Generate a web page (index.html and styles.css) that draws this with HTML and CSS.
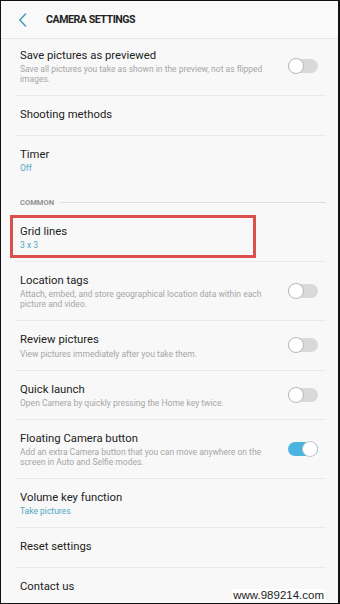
FILE: index.html
```html
<!DOCTYPE html>
<html>
<head>
<meta charset="utf-8">
<link rel="stylesheet" href="styles.css">
</head>
<body>
<div class="frame">
  <header class="topbar">
    <svg class="back" width="10" height="14" viewBox="0 0 10 14"><path d="M7.5 1 L1.8 7 L7.5 13" fill="none" stroke="#3d9db6" stroke-width="1.5" stroke-linecap="round" stroke-linejoin="round"/></svg>
    <span class="topbar-title">CAMERA SETTINGS</span>
  </header>
  <div class="list">
    <div class="row first">
      <div class="text">
        <div class="title">Save pictures as previewed</div>
        <div class="sub">Save all pictures you take as shown in the preview, not as flipped images.</div>
      </div>
      <span class="toggle"><span class="knob"></span></span>
    </div>
    <div class="row">
      <div class="text"><div class="title">Shooting methods</div></div>
    </div>
    <div class="row plain">
      <div class="text">
        <div class="title">Timer</div>
        <div class="value">Off</div>
      </div>
    </div>
    <div class="category"><span class="cat-label">COMMON</span><span class="cat-line"></span></div>
    <div class="row highlight">
      <div class="text">
        <div class="title">Grid lines</div>
        <div class="value">3 x 3</div>
      </div>
      <span class="mark"></span>
    </div>
    <div class="row">
      <div class="text">
        <div class="title">Location tags</div>
        <div class="sub">Attach, embed, and store geographical location data within each picture and video.</div>
      </div>
      <span class="toggle"><span class="knob"></span></span>
    </div>
    <div class="row">
      <div class="text">
        <div class="title">Review pictures</div>
        <div class="sub">View pictures immediately after you take them.</div>
      </div>
      <span class="toggle"><span class="knob"></span></span>
    </div>
    <div class="row">
      <div class="text">
        <div class="title">Quick launch</div>
        <div class="sub">Open Camera by quickly pressing the Home key twice.</div>
      </div>
      <span class="toggle"><span class="knob"></span></span>
    </div>
    <div class="row">
      <div class="text">
        <div class="title">Floating Camera button</div>
        <div class="sub">Add an extra Camera button that you can move anywhere on the screen in Auto and Selfie modes.</div>
      </div>
      <span class="toggle on"><span class="knob"></span></span>
    </div>
    <div class="row">
      <div class="text">
        <div class="title">Volume key function</div>
        <div class="value">Take pictures</div>
      </div>
    </div>
    <div class="row">
      <div class="text"><div class="title">Reset settings</div></div>
    </div>
    <div class="row plain">
      <div class="text"><div class="title">Contact us</div></div>
    </div>
  </div>
  <span class="watermark">www.989214.com</span>
</div>
</body>
</html>
```
FILE: styles.css
```css
* { box-sizing: border-box; }
html, body { margin: 0; padding: 0; }
body {
  width: 340px;
  height: 604px;
  background: #f8f8f8;
  font-family: Roboto, "Noto Sans", Arial, sans-serif;
  overflow: hidden;
}
.frame {
  position: relative;
  width: 340px;
  height: 604px;
  border: 1px solid #111;
  border-right-width: 2px;
  background: #f8f8f8;
  overflow: hidden;
}
.topbar {
  height: 38px;
  display: flex;
  align-items: center;
  border-bottom: 1px solid #e6e6e6;
  background: #f9f9f9;
}
.back {
  display: block;
  margin-left: 17px;
  margin-right: 18px;
}
.topbar-title {
  font-size: 10.6px;
  font-weight: 700;
  color: #222;
  letter-spacing: -0.45px;
}
.list {
  margin: 0 12px 0 14px;
}
.row {
  position: relative;
  display: flex;
  align-items: center;
  padding: 11px 8px 11px 5px;
  border-bottom: 1px solid #e9e9e9;
}
.row.first { padding-top: 9px; }
.row.plain { border-bottom: none; padding-bottom: 10px; }
.text { flex: 1; min-width: 0; }
.title {
  font-size: 11.3px;
  line-height: 16.25px;
  color: #222;
}
.sub {
  font-size: 8.5px;
  line-height: 10px;
  color: #a6a6a6;
  padding-right: 20px;
}
.value {
  font-size: 8.5px;
  line-height: 10px;
  color: #52a7c3;
}
.toggle {
  position: relative;
  flex: none;
  width: 30px;
  height: 14px;
  border-radius: 7px;
  background: #d9d9d9;
}
.knob {
  position: absolute;
  left: 0;
  top: -1px;
  width: 16px;
  height: 16px;
  border-radius: 50%;
  background: #fff;
  border: 1px solid #b8b8b8;
}
.toggle.on { background: #4bb3e0; }
.toggle.on .knob { left: auto; right: 0; border-color: #c8c8c8; }
.category {
  height: 30px;
  display: flex;
  align-items: center;
  padding: 14px 0 4px 5px;
}
.cat-label {
  font-size: 7.6px;
  font-weight: 700;
  color: #929292;
  margin-right: 6px;
}
.cat-line {
  flex: 1;
  height: 1px;
  background: #dddddd;
}
.mark {
  position: absolute;
  left: -5px;
  top: 2px;
  width: 246px;
  height: 43px;
  border: 3px solid #d9504d;
}
.watermark {
  position: absolute;
  right: 13px;
  bottom: 2px;
  font-family: "Liberation Sans", Arial, sans-serif;
  font-size: 11.5px;
  line-height: 12px;
  color: #222;
  background: #fff;
  padding: 0 1px;
}
```
